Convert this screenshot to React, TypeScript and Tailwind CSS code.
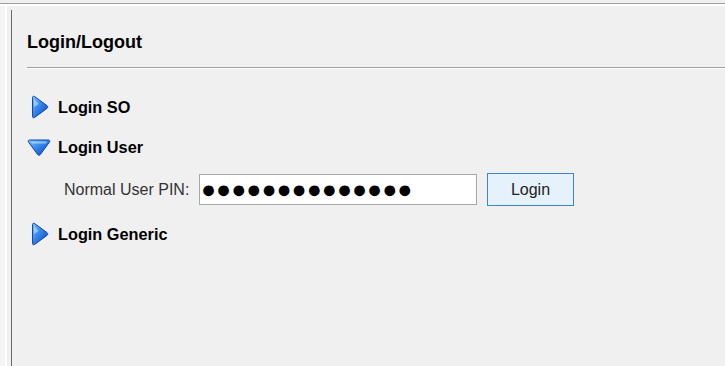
import * as React from 'react';

const font = { fontFamily: '"Liberation Sans", Arial, sans-serif' };

function ArrowRight() {
  return (
    <svg width="19" height="24" viewBox="0 0 19 24" className="shrink-0">
      <defs>
        <linearGradient id="gr" x1="0" y1="0" x2="1" y2="1">
          <stop offset="0" stopColor="#7cc4fb" />
          <stop offset="0.5" stopColor="#2f7fe8" />
          <stop offset="1" stopColor="#0d45bd" />
        </linearGradient>
      </defs>
      <path
        d="M2.5 2.5 C2.5 1.2 3.7 0.8 4.7 1.6 L17 10.6 C18 11.4 18 12.6 17 13.4 L4.7 22.4 C3.7 23.2 2.5 22.8 2.5 21.5 Z"
        fill="url(#gr)"
        stroke="#1746a8"
        strokeWidth="1"
      />
      <path d="M4 4 L4 12 L8.5 9 Z" fill="#c8ecff" opacity="0.55" />
    </svg>
  );
}

function ArrowDown() {
  return (
    <svg width="24" height="19" viewBox="0 0 24 19" className="shrink-0">
      <defs>
        <linearGradient id="gd" x1="0" y1="0" x2="1" y2="1">
          <stop offset="0" stopColor="#7cc4fb" />
          <stop offset="0.5" stopColor="#2f7fe8" />
          <stop offset="1" stopColor="#0d45bd" />
        </linearGradient>
      </defs>
      <path
        d="M2.5 2 C1.2 2 0.8 3.2 1.6 4.2 L10.6 16.5 C11.4 17.5 12.6 17.5 13.4 16.5 L22.4 4.2 C23.2 3.2 22.8 2 21.5 2 Z"
        fill="url(#gd)"
        stroke="#1746a8"
        strokeWidth="1"
      />
      <path d="M4 3.5 L20 3.5 L19 5.5 L5 5.5 Z" fill="#c8ecff" opacity="0.55" />
    </svg>
  );
}

function Section({ open, title, children }: { open?: boolean; title: string; children?: React.ReactNode }) {
  return (
    <div>
      <div className="flex h-[24px] items-center">
        <div className="flex w-[31px] justify-start">
          {open ? <ArrowDown /> : <div className="ml-[3px]"><ArrowRight /></div>}
        </div>
        <span className="text-[16.3px] font-bold text-black">{title}</span>
      </div>
      {children}
    </div>
  );
}

export default function App() {
  return (
    <div className="h-[366px] w-[725px] overflow-hidden bg-[#f0f0f0]" style={font}>
      <div className="h-[3px]" />
      <div className="h-px bg-[#a0a0a0]" />
      <div className="h-[2px] bg-white" />
      <div className="flex h-[360px]">
        <div className="w-[5px] bg-[#f4f4f4]" />
        <div className="w-[2px] bg-white" />
        <div className="w-[4px] bg-[#f0f0f0]" />
        <div className="mt-[4px] w-px bg-[#6a6a6a]" />
        <div className="flex-1 pl-[15px]">
          <div className="flex h-[61px] items-center pt-[12px] text-[18px] font-bold text-black">Login/Logout</div>
          <div className="h-px bg-[#a0a0a0]" />
          <div className="h-px bg-white" />
          <div className="flex flex-col pt-[26px]">
            <Section title="Login SO" />
            <div className="h-[16px]" />
            <Section open title="Login User">
              <div className="mt-[14px] flex items-center">
                <span className="ml-[37px] w-[135px] text-[16px] text-[#333]">Normal User PIN:</span>
                <div className="flex h-[31px] w-[278px] items-center border border-[#a8a8a8] bg-white pl-[1px]">
                  <span className="text-[25px] leading-none text-black">●●●●●●●●●●●●●●</span>
                </div>
                <button className="ml-[10px] h-[33px] w-[87px] border border-[#3b86d0] bg-[#e5f1fb] text-[16px] text-[#222]">
                  Login
                </button>
              </div>
            </Section>
            <div className="h-[16px]" />
            <Section title="Login Generic" />
          </div>
        </div>
      </div>
    </div>
  );
}
